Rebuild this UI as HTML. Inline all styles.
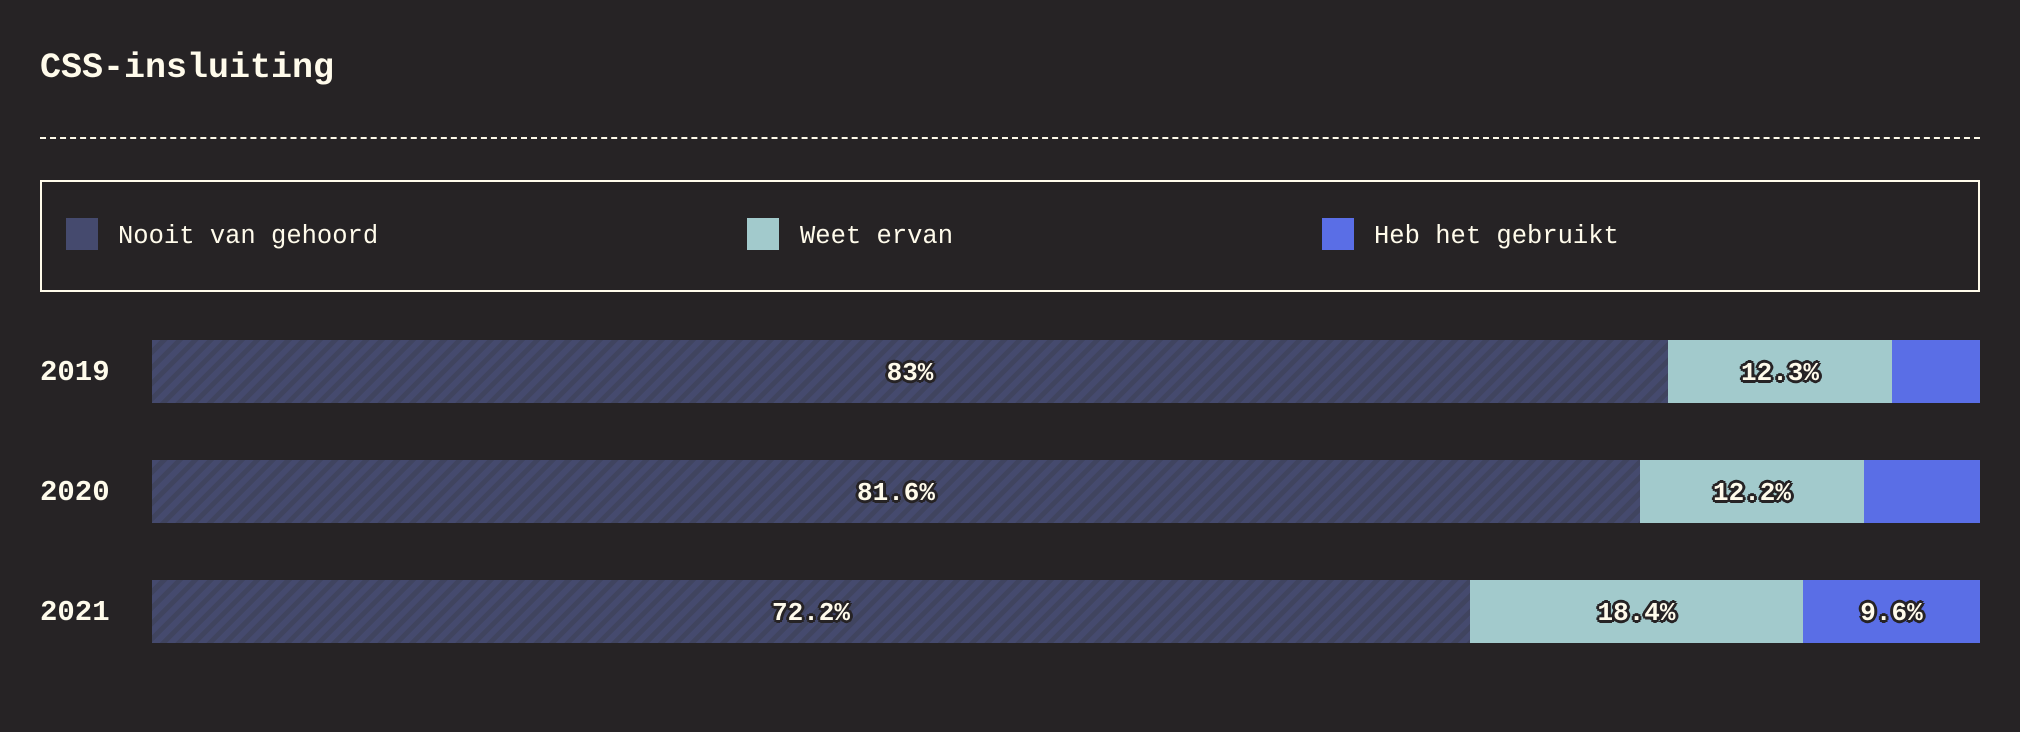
<!DOCTYPE html>
<html><head><meta charset="utf-8"><style>
*{margin:0;padding:0;box-sizing:border-box}
body{width:2020px;height:732px;background:#262325;color:#fffbeb;font-family:"Liberation Mono",monospace;position:relative;overflow:hidden}
.t{position:absolute;left:40px;top:46px;font-size:35px;font-weight:bold;line-height:44px}
.dash{position:absolute;left:40px;top:137px;width:1940px;border-top:2px dashed #fffbeb}
.leg{position:absolute;left:40px;top:180px;width:1940px;height:112px;border:2px solid #fffbeb}
.sw{position:absolute;top:36px;width:32px;height:32px}
.lt{position:absolute;top:35px;font-size:25.5px;line-height:40px}
.yr{position:absolute;left:40px;font-size:29px;font-weight:bold;line-height:66px}
.bar{position:absolute;left:152px;width:1828px;height:63px;display:flex}
.s{height:63px;display:flex;align-items:center;justify-content:center;font-size:26px;font-weight:bold;color:#fffbeb;padding-top:3px;
text-shadow:2px 0 #262325,-2px 0 #262325,0 2px #262325,0 -2px #262325,2px 2px #262325,-2px -2px #262325,2px -2px #262325,-2px 2px #262325,3px 0 #262325,-3px 0 #262325,0 3px #262325,0 -3px #262325}
.a{background:repeating-linear-gradient(135deg,#454a6e 0 6px,#40445f 6px 11px)}
.b{background:#a2cacc}
.c{background:#5a6ee6}
</style></head><body>
<div class="t">CSS-insluiting</div>
<div class="dash"></div>
<div class="leg">
<div class="sw" style="left:24px;background:#454a6e"></div><div class="lt" style="left:76px">Nooit van gehoord</div>
<div class="sw" style="left:705px;background:#a2cacc"></div><div class="lt" style="left:758px">Weet ervan</div>
<div class="sw" style="left:1280px;background:#5a6ee6"></div><div class="lt" style="left:1332px">Heb het gebruikt</div>
</div>
<div class="yr" style="top:340px">2019</div>
<div class="bar" style="top:340px"><div class="s a" style="width:1516px">83%</div><div class="s b" style="width:224px">12.3%</div><div class="s c" style="flex:1"></div></div>
<div class="yr" style="top:460px">2020</div>
<div class="bar" style="top:460px"><div class="s a" style="width:1488px">81.6%</div><div class="s b" style="width:224px">12.2%</div><div class="s c" style="flex:1"></div></div>
<div class="yr" style="top:580px">2021</div>
<div class="bar" style="top:580px"><div class="s a" style="width:1318px">72.2%</div><div class="s b" style="width:333px">18.4%</div><div class="s c" style="flex:1">9.6%</div></div>
</body></html>
